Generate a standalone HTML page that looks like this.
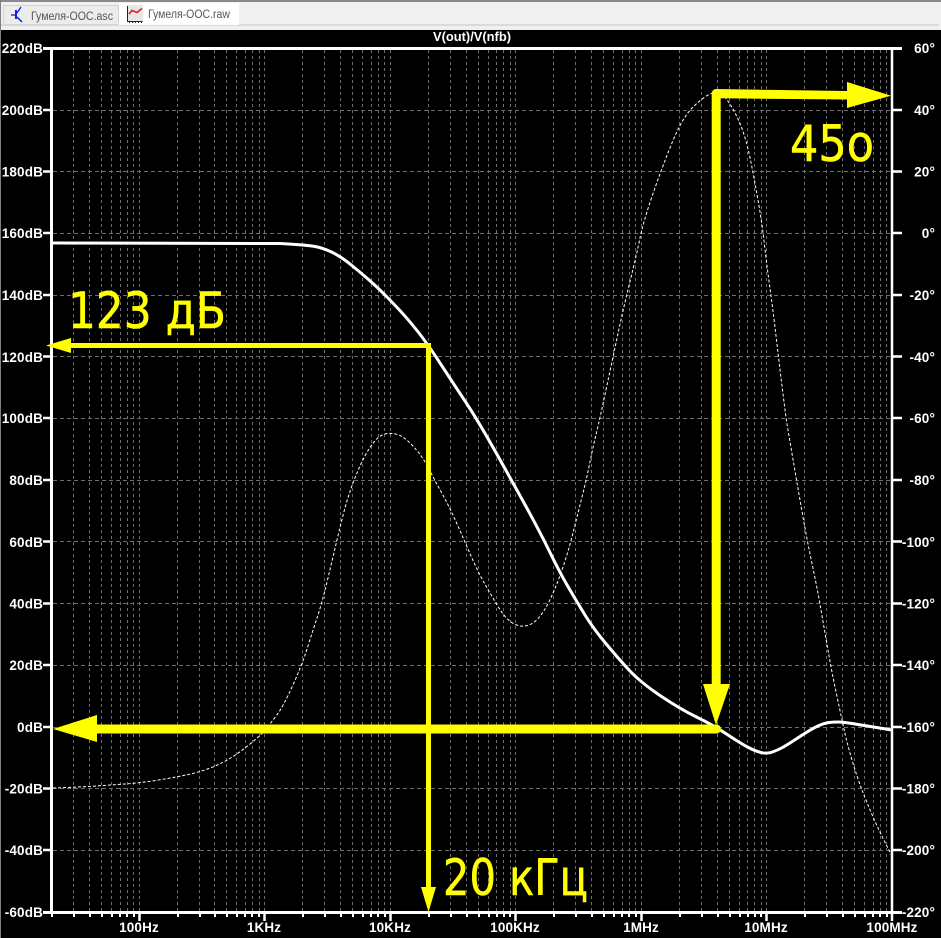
<!DOCTYPE html>
<html><head><meta charset="utf-8"><style>
html,body{margin:0;padding:0;background:#000}
svg{display:block}
.l{font:bold 13.5px "Liberation Sans",sans-serif;fill:#fff;letter-spacing:.15px}
.y{font:50px "DejaVu Sans",sans-serif;fill:#ff0;stroke:#ff0;stroke-width:.6px}
.t{font:11.5px "Liberation Sans",sans-serif;fill:#555}
</style></head><body>
<svg width="941" height="938" viewBox="0 0 941 938" xmlns="http://www.w3.org/2000/svg">
<rect width="941" height="938" fill="#000"/>
<!-- tab strip -->
<rect width="941" height="30" fill="#f0f0f0"/>
<rect width="941" height="2" fill="#8a8a8a"/>
<rect x="0" y="0" width="1" height="938" fill="#808080"/>
<rect x="1" y="24" width="938" height="2" fill="#d9d9d9"/>
<rect x="3.5" y="5.5" width="115" height="19" fill="#ececec" stroke="#d4d4d4"/>
<rect x="119" y="3" width="120" height="22" fill="#fff"/>
<g fill="none" stroke="#1a1ae0">
<path d="M11 15H15" stroke-width="1.3"/>
<path d="M16 10V19" stroke-width="2"/>
<path d="M17 13L21 7" stroke-width="1.3"/>
<path d="M17 17L22 22" stroke-width="1.5"/>
</g>
<rect x="127" y="5" width="16" height="17" fill="#e6e6e6"/>
<path d="M127.5 6V21.5H142.5M129.5 21V23M132.5 21V23M135.5 21V23M138.5 21V23M141.5 21V23" fill="none" stroke="#222" stroke-width="1"/>
<path d="M129 14L132 10.5L137 12.5L142 8.5" fill="none" stroke="#e02020" stroke-width="1.6"/>
<text class="t" x="31" y="20" textLength="82" lengthAdjust="spacingAndGlyphs">Гумеля-ООС.asc</text>
<text class="t" x="148" y="18" textLength="82" lengthAdjust="spacingAndGlyphs">Гумеля-ООС.raw</text>
<!-- title -->
<text x="433" y="41" fill="#fff" font-family="Liberation Sans" font-weight="bold" font-size="12.500" textLength="78" lengthAdjust="spacingAndGlyphs">V(out)/V(nfb)</text>
<!-- grid -->
<path shape-rendering="crispEdges" fill="none" stroke="#6e6e6e" stroke-width="1" stroke-dasharray="3 3" d="M73.500 50V911M89.500 50V911M101.500 50V911M111.500 50V911M120.500 50V911M127.500 50V911M133.500 50V911M139.500 50V911M177.500 50V911M199.500 50V911M214.500 50V911M226.500 50V911M236.500 50V911M245.500 50V911M252.500 50V911M259.500 50V911M264.500 50V911M302.500 50V911M324.500 50V911M340.500 50V911M352.500 50V911M362.500 50V911M371.500 50V911M378.500 50V911M384.500 50V911M390.500 50V911M428.500 50V911M450.500 50V911M466.500 50V911M478.500 50V911M488.500 50V911M496.500 50V911M503.500 50V911M510.500 50V911M515.500 50V911M553.500 50V911M575.500 50V911M591.500 50V911M603.500 50V911M613.500 50V911M622.500 50V911M629.500 50V911M635.500 50V911M641.500 50V911M679.500 50V911M701.500 50V911M717.500 50V911M729.500 50V911M739.500 50V911M747.500 50V911M754.500 50V911M761.500 50V911M766.500 50V911M804.500 50V911M826.500 50V911M842.500 50V911M854.500 50V911M864.500 50V911M873.500 50V911M880.500 50V911M886.500 50V911"/>
<path shape-rendering="crispEdges" fill="none" stroke="#6e6e6e" stroke-width="1" stroke-dasharray="4 3" d="M53 110.500H891M53 171.500H891M53 233.500H891M53 295.500H891M53 356.500H891M53 418.500H891M53 480.500H891M53 541.500H891M53 603.500H891M53 665.500H891M53 727.500H891M53 788.500H891M53 850.500H891"/>
<!-- axes -->
<g stroke="#fff" fill="none">
<path d="M51.500 47V914" stroke-width="3"/>
<path d="M43 48.500H902" stroke-width="3"/>
<path d="M43 912.500H902" stroke-width="3"/>
<path d="M892 47V914" stroke-width="2.500"/>
<path stroke-width="2.500" d="M43 110H51M43 171.500H51M43 233H51M43 295H51M43 356.500H51M43 418H51M43 480H51M43 541.500H51M43 603.500H51M43 665H51M43 727H51M43 788.500H51M43 850H51"/>
<path stroke-width="2.500" d="M892 110H902M892 171.500H902M892 233H902M892 295H902M892 356.500H902M892 418H902M892 480H902M892 541.500H902M892 603.500H902M892 665H902M892 727H902M892 788.500H902M892 850H902"/>
<path stroke-width="2" d="M52 914V917M74 914V917M90 914V917M102 914V917M112 914V917M120 914V917M127 914V917M134 914V917M178 914V917M200 914V917M215 914V917M227 914V917M237 914V917M245 914V917M252 914V917M259 914V917M303 914V917M325 914V917M341 914V917M353 914V917M363 914V917M371 914V917M378 914V917M385 914V917M429 914V917M451 914V917M467 914V917M479 914V917M489 914V917M497 914V917M504 914V917M510 914V917M554 914V917M576 914V917M592 914V917M604 914V917M614 914V917M622 914V917M629 914V917M636 914V917M680 914V917M702 914V917M718 914V917M730 914V917M740 914V917M748 914V917M755 914V917M761 914V917M805 914V917M827 914V917M843 914V917M855 914V917M865 914V917M873 914V917M880 914V917M887 914V917"/>
<path stroke-width="2.500" d="M139.500 914V921M264.500 914V921M390.500 914V921M515.500 914V921M641.500 914V921M766.500 914V921M892 914V921"/>
</g>
<!-- labels -->
<g text-anchor="end">
<text class="l" x="43" y="53">220dB</text><text class="l" x="43" y="115">200dB</text><text class="l" x="43" y="176.500">180dB</text><text class="l" x="43" y="238">160dB</text><text class="l" x="43" y="300">140dB</text><text class="l" x="43" y="362">120dB</text><text class="l" x="43" y="423">100dB</text><text class="l" x="43" y="485">80dB</text><text class="l" x="43" y="547">60dB</text><text class="l" x="43" y="608.500">40dB</text><text class="l" x="43" y="670">20dB</text><text class="l" x="43" y="732">0dB</text><text class="l" x="43" y="793.500">-20dB</text><text class="l" x="43" y="855">-40dB</text><text class="l" x="43" y="917">-60dB</text>
<text class="l" x="935" y="53">60°</text><text class="l" x="935" y="115">40°</text><text class="l" x="935" y="176.500">20°</text><text class="l" x="935" y="238">0°</text><text class="l" x="935" y="300">-20°</text><text class="l" x="935" y="362">-40°</text><text class="l" x="935" y="423">-60°</text><text class="l" x="935" y="485">-80°</text><text class="l" x="935" y="547">-100°</text><text class="l" x="935" y="608.500">-120°</text><text class="l" x="935" y="670">-140°</text><text class="l" x="935" y="732">-160°</text><text class="l" x="935" y="793.500">-180°</text><text class="l" x="935" y="855">-200°</text><text class="l" x="935" y="917">-220°</text>
</g>
<g text-anchor="middle">
<text class="l" x="139" y="932">100Hz</text><text class="l" x="264" y="932">1KHz</text><text class="l" x="390" y="932">10KHz</text><text class="l" x="515" y="932">100KHz</text><text class="l" x="641" y="932">1MHz</text><text class="l" x="766" y="932">10MHz</text><text class="l" x="892" y="932">100MHz</text>
</g>
<!-- dashed curve -->
<path fill="none" stroke="#fff" stroke-width="1" stroke-dasharray="3 2" d="M53 788Q83 787 96.500 786Q110 785 125 784Q140 783 158.500 780Q177 777 188.500 774.500Q200 772 211.500 767.500Q223 763 233 756.500Q243 750 253 741.500Q263 733 266.500 728.500Q270 724 276.500 715.500Q283 707 292.500 686Q302 665 307.500 647.500Q313 630 317.500 616.500Q322 603 327.500 580Q333 557 336.500 542Q340 527 343.500 513.500Q347 500 351 488.500Q355 477 360 466Q365 455 370 447.500Q375 440 379 437Q383 434 387.500 433.500Q392 433 397.500 434.500Q403 436 410 443Q417 450 421.500 456.500Q426 463 429.500 470Q433 477 441.500 492.500Q450 508 457.500 525Q465 542 471.500 557Q478 572 484 582.500Q490 593 496.500 604Q503 615 508 619.500Q513 624 518 625.500Q523 627 529 625Q535 623 541 615Q547 607 553.500 592Q560 577 565 561Q570 545 573.500 531Q577 517 582 497Q587 477 590 462Q593 447 596.500 432.500Q600 418 606.500 387.500Q613 357 618 333.500Q623 310 630 281.500Q637 253 640 238Q643 223 651.500 198Q660 173 668.500 151.500Q677 130 682.500 121Q688 112 692.500 107.500Q697 103 703.500 98Q710 93 715 93Q720 93 724 96.500Q728 100 734 111Q740 122 744 134.500Q748 147 751.500 165Q755 183 758.500 203Q762 223 764.500 245Q767 267 770 288.500Q773 310 776.500 340Q780 370 783 394Q786 418 787 424Q788 430 792.500 456.500Q797 483 802 511.500Q807 540 812 563.500Q817 587 821 610Q825 633 828.500 653Q832 673 837 696.500Q842 720 844.500 731.500Q847 743 852 760Q857 777 862 790Q867 803 873.500 818Q880 833 893 858"/>
<!-- solid curve -->
<path fill="none" stroke="#fff" stroke-width="3" stroke-linejoin="round" d="M53 243L280 243.500Q307 245 315 246.500Q323 248 331.500 252Q340 256 350 264Q360 272 368.500 279.500Q377 287 383.500 293.500Q390 300 398.500 309Q407 318 417 330.500Q427 343 440 363Q453 383 465 401Q477 419 494.500 450Q512 481 526 506.500Q540 532 550 552.500Q560 573 568.500 587.500Q577 602 585 615Q593 628 605 642.500Q617 657 628.500 669.500Q640 682 660 695.500Q680 709 696.500 717Q713 725 726.500 734Q740 743 747.500 747Q755 751 761 752.500Q767 754 772.500 752Q778 750 782.500 747.500Q787 745 800 736.500Q813 728 819 725.500Q825 723 829 722.500Q833 722 838 722Q843 722 855 724Q867 726 892 730"/>
<!-- yellow arrows -->
<g fill="#ff0" stroke="none">
<path d="M46 345.500L71 338V343H431V348H71V353Z"/>
<path d="M426 345H431V887H436L428.500 912L421 887H426Z"/>
<path d="M53 729L97 715V724.500H716.500A4.500 4.500 0 0 1 716.500 733.500H97V742Z"/>
<path d="M711.700 684V93.500A4.500 4.500 0 0 1 716 89L847 91V82L891 95.700L847 108V99.500L720.700 98.300V684H730L716 725L703 684Z"/>
</g>
<text class="y" x="790" y="161" textLength="84" lengthAdjust="spacingAndGlyphs">45o</text>
<text class="y" x="68" y="328" textLength="158" lengthAdjust="spacingAndGlyphs">123 дБ</text>
<text class="y" x="443" y="895" textLength="145" lengthAdjust="spacingAndGlyphs">20 кГц</text>
</svg>
</body></html>
